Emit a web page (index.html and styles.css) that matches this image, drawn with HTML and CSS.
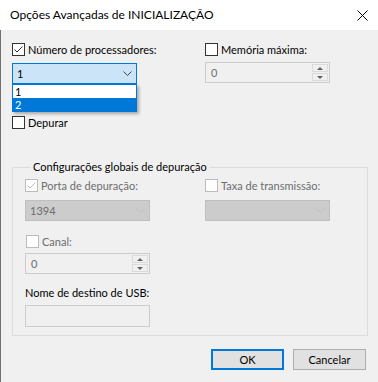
FILE: index.html
```html
<!DOCTYPE html>
<html lang="pt">
<head>
    <meta charset="UTF-8">
    <title>Opções Avançadas de INICIALIZAÇÃO</title>
    <link rel="stylesheet" href="styles.css">
</head>
<body>
    <div class="window">
        <div class="titlebar">
            <span class="title">Opções Avançadas de INICIALIZAÇÃO</span>
            <svg class="close" width="11" height="11" viewBox="0 0 11 11">
                <path d="M0.5 0.5 L10.5 10.5 M10.5 0.5 L0.5 10.5" stroke="#000" stroke-width="1" fill="none"/>
            </svg>
        </div>

        <div class="content">
            <div class="top-grid">
                <div class="col">
                    <div class="check">
                        <span class="box"><svg width="11" height="11" viewBox="0 0 11 11"><path d="M1.5 5.5 L4 8 L9.5 2.5" stroke="#333" fill="none"/></svg></span>
                        <span>Número de processadores:</span>
                    </div>
                    <div class="combo active">
                        <span>1</span>
                        <svg width="9" height="5" viewBox="0 0 9 5"><path d="M0.5 0.5 L4.5 4.5 L8.5 0.5" stroke="#444" fill="none"/></svg>
                        <!-- open list of the combo -->
                        <ul class="dropdown">
                            <li>1</li>
                            <li class="selected">2</li>
                        </ul>
                    </div>
                    <div class="check depurar">
                        <span class="box"></span>
                        <span>Depurar</span>
                    </div>
                </div>
                <div class="col">
                    <div class="check">
                        <span class="box"></span>
                        <span>Memória máxima:</span>
                    </div>
                    <div class="spin">
                        <span class="val">0</span>
                        <div class="spin-btns">
                            <span class="up"></span>
                            <span class="down"></span>
                        </div>
                    </div>
                </div>
            </div>

            <fieldset class="group">
                <legend>Configurações globais de depuração</legend>
                <div class="pair">
                    <div class="col">
                        <div class="check disabled">
                            <span class="box"><svg width="11" height="11" viewBox="0 0 11 11"><path d="M1.5 5.5 L4 8 L9.5 2.5" stroke="#bcbcbc" fill="none"/></svg></span>
                            <span>Porta de depuração:</span>
                        </div>
                        <div class="combo disabled">
                            <span>1394</span>
                            <svg width="9" height="5" viewBox="0 0 9 5"><path d="M0.5 0.5 L4.5 4.5 L8.5 0.5" stroke="#bfbfbf" fill="none"/></svg>
                        </div>
                    </div>
                    <div class="col">
                        <div class="check disabled">
                            <span class="box"></span>
                            <span>Taxa de transmissão:</span>
                        </div>
                        <div class="combo disabled">
                            <span></span>
                            <svg width="9" height="5" viewBox="0 0 9 5"><path d="M0.5 0.5 L4.5 4.5 L8.5 0.5" stroke="#bfbfbf" fill="none"/></svg>
                        </div>
                    </div>
                </div>

                <div class="check disabled canal">
                    <span class="box"></span>
                    <span>Canal:</span>
                </div>
                <div class="spin canal-spin">
                    <span class="val">0</span>
                    <div class="spin-btns">
                        <span class="up"></span>
                        <span class="down"></span>
                    </div>
                </div>

                <div class="usb-label">Nome de destino de USB:</div>
                <div class="textbox"></div>
            </fieldset>

            <div class="buttons">
                <button class="btn default">OK</button>
                <button class="btn">Cancelar</button>
            </div>
        </div>
    </div>
</body>
</html>
```

FILE: styles.css
```css
body {
    margin: 0;
    padding: 0;
    background: #f0f0f0;
    font-family: Lato, "Liberation Sans", sans-serif;
    font-size: 11px;
    color: #000;
}

.window {
    width: 378px;
    height: 382px;
    overflow: hidden;
}

.titlebar {
    height: 30px;
    background: #fff;
    display: flex;
    align-items: center;
    justify-content: space-between;
    padding: 0 10px 0 10px;
    box-sizing: border-box;
}

.title {
    font-size: 12px;
    line-height: 16px;
}

.content {
    border-left: 1px solid #707070;
    padding: 13px 0 0 11px;
    height: 352px;
    box-sizing: border-box;
}

.top-grid {
    display: grid;
    grid-template-columns: 193px 1fr;
}

.col {
    display: flex;
    flex-direction: column;
    align-items: flex-start;
}

/* checkbox + label */
.check {
    display: flex;
    align-items: center;
    gap: 3px;
    height: 13px;
    line-height: 15px;
    white-space: nowrap;
}

.box {
    width: 13px;
    height: 13px;
    box-sizing: border-box;
    border: 1px solid #333;
    background: #fff;
    display: flex;
    flex: none;
}

.check.disabled {
    color: #6d6d6d;
}

.check.disabled .box {
    border-color: #bcbcbc;
}

.depurar {
    margin-top: 32px;
}

/* combo boxes */
.combo {
    position: relative;
    width: 125px;
    height: 21px;
    box-sizing: border-box;
    border: 1px solid #adadad;
    margin-top: 7px;
    padding: 0 4px;
    display: flex;
    align-items: center;
    justify-content: space-between;
    line-height: 15px;
}

.combo.active {
    border-color: #0078d7;
    background: #cce4f7;
}

.combo.disabled {
    border-color: #bfbfbf;
    background: #cccccc;
    color: #6d6d6d;
    margin-top: 8px;
}

.dropdown {
    position: absolute;
    left: -1px;
    right: -1px;
    top: calc(100% + 1px);
    margin: 0;
    padding: 0;
    list-style: none;
    border: 1px solid #0078d7;
    background: #fff;
    box-shadow: 2px 2px 3px rgba(0, 0, 0, 0.3);
}

.dropdown li {
    height: 13px;
    line-height: 13px;
    padding-left: 2px;
}

.dropdown li.selected {
    background: #0078d7;
    color: #fff;
}

/* spin boxes */
.spin {
    width: 125px;
    height: 21px;
    box-sizing: border-box;
    border: 1px solid #cccccc;
    background: #f0f0f0;
    margin-top: 6px;
    display: flex;
    align-items: center;
    justify-content: space-between;
}

.spin .val {
    padding-left: 5px;
    color: #6d6d6d;
    line-height: 15px;
}

.spin-btns {
    width: 17px;
    height: 100%;
    box-sizing: border-box;
    padding: 1px 1px 1px 0;
    display: flex;
    flex-direction: column;
    gap: 1px;
}

.spin-btns span {
    flex: 1;
    border: 1px solid #dadada;
    background: #f0f0f0;
    display: flex;
    align-items: center;
    justify-content: center;
}

.spin-btns .up::after {
    content: "";
    border-left: 3px solid transparent;
    border-right: 3px solid transparent;
    border-bottom: 3px solid #606060;
}

.spin-btns .down::after {
    content: "";
    border-left: 3px solid transparent;
    border-right: 3px solid transparent;
    border-top: 3px solid #606060;
}

/* group box */
.group {
    margin: 30px 10px 0 0;
    padding: 4px 12px 8px 12px;
    border: 1px solid #dcdcdc;
    min-width: 0;
}

.group legend {
    margin-left: 6px;
    padding: 0 2px;
    line-height: 16px;
}

.pair {
    display: grid;
    grid-template-columns: 180px 1fr;
}

.canal {
    margin-top: 14px;
    margin-left: 1px;
}

.canal-spin {
    margin-top: 5px;
}

.usb-label {
    margin-top: 11px;
    line-height: 16px;
}

.textbox {
    width: 125px;
    height: 22px;
    box-sizing: border-box;
    border: 1px solid #cccccc;
    background: #f0f0f0;
    margin-top: 4px;
}

/* bottom buttons */
.buttons {
    display: flex;
    justify-content: flex-end;
    gap: 9px;
    padding-right: 12px;
    margin-top: 13px;
}

.btn {
    width: 73px;
    height: 21px;
    box-sizing: border-box;
    border: 1px solid #adadad;
    background: #e1e1e1;
    font-family: inherit;
    font-size: 11px;
    color: #000;
    padding: 0;
}

.btn.default {
    border: 2px solid #0078d7;
}
```
